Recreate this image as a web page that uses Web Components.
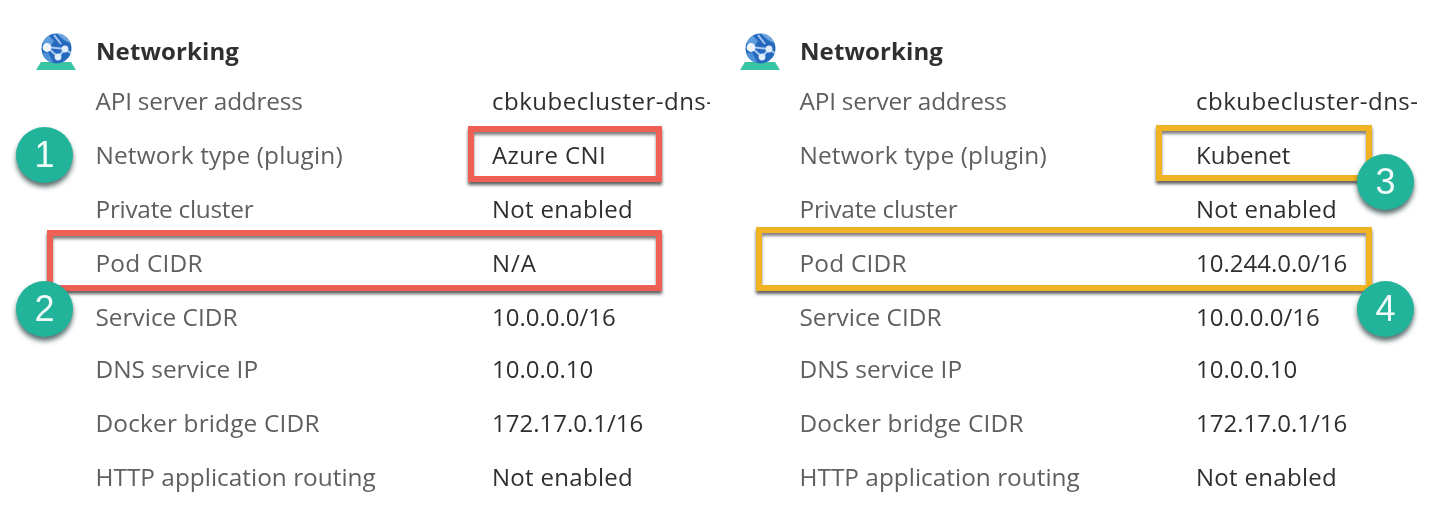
<!DOCTYPE html>
<html lang="en">
<head>
<meta charset="utf-8">
<title>Networking</title>
<style>
	html, body { margin: 0; background: #fff; }
	body { display: flex; width: 1436px; height: 522px; overflow: hidden; font-family: "Open Sans", "Noto Sans", sans-serif; filter: blur(.35px); }
</style>
</head>
<body>

<template id="panel-template">
	<style>
		:host { display: block; position: relative; width: 704px; height: 522px; box-sizing: border-box; padding: 27px 0 0 34px; flex: none; }
		.head { display: flex; align-items: center; height: 47px; gap: 20px; }
		h2 { margin: 0; font-size: 24px; font-weight: 700; color: #2f2f2f; letter-spacing: .1px; }
		.rows { display: flex; flex-direction: column; }
		svg { flex: none; width: 42px; height: 47px; }
	</style>
	<div class="head">
		<svg viewBox="0 0 42 47">
			<defs><clipPath id="globe"><circle cx="22.5" cy="21.5" r="15"/></clipPath></defs>
			<path d="M7 35 H37 L42 43 H2 Z" fill="#38c4a2"/>
			<circle cx="22.5" cy="21.5" r="15" fill="#2469bd"/>
			<g clip-path="url(#globe)">
				<path d="M12 6 L20 14 L16 20 L7 16 Z" fill="#5f9bdc"/>
				<path d="M22 6 L30 13 L38 17 L38 8 Z" fill="#6ea6e2"/>
				<path d="M6 27 L14 25 L20 37 L10 36 Z" fill="#4f8fd6"/>
				<path d="M13 20 L31 22 M13 20 L24 30 M31 22 L24 30 M20 8 L27 17 M31 22 L38 27" stroke="#a9c9ee" stroke-width="2" fill="none"/>
			</g>
			<circle cx="13" cy="20.5" r="4.4" fill="#eef4fb"/>
			<circle cx="31" cy="22" r="3.4" fill="#e1ecf9"/>
			<circle cx="24" cy="30" r="3.4" fill="#e1ecf9"/>
		</svg>
		<h2><slot name="title"></slot></h2>
	</div>
	<div class="rows"><slot></slot></div>
	<slot name="over"></slot>
</template>

<template id="row-template">
	<style>
		:host { display: grid; box-sizing: border-box; grid-template-columns: 396px var(--clip, 218px); height: 54px; align-items: center; padding-left: 62px; font-size: 24px; line-height: 32px; }
		.label { color: #5f5f5f; white-space: nowrap; font-size: 24.4px; margin-left: -.5px; letter-spacing: var(--lls, 0); }
		.value { color: #2f2f2f; white-space: nowrap; overflow: hidden; letter-spacing: var(--ls, 0); }
	</style>
	<div class="label"><slot name="label"></slot></div>
	<div class="value"><slot></slot></div>
</template>

<template id="mark-template">
	<style>
		:host { display: block; position: absolute; box-sizing: border-box; border: 6px solid var(--c); box-shadow: 0 3px 3px rgba(30,30,30,.7), inset 0 3px 3px rgba(30,30,30,.55); }
	</style>
</template>

<template id="badge-template">
	<style>
		:host { display: flex; position: absolute; align-items: center; justify-content: center; width: 57px; height: 56px; border-radius: 50%; background: #22b39b; color: #f0faf8; font-family: "Liberation Sans", sans-serif; font-size: 36px; box-shadow: 0 4px 5px rgba(20,50,50,.7); }
	</style>
	<slot></slot>
</template>

<net-panel>
	<span slot="title">Networking</span>
	<net-row style="--ls:.5px; --lls:-.22px"><span slot="label">API server address</span>cbkubecluster-dns-1</net-row>
	<net-row style="--ls:.4px; --lls:.15px"><span slot="label">Network type (plugin)</span>Azure CNI</net-row>
	<net-row style="--ls:.3px; --lls:-.28px"><span slot="label">Private cluster</span>Not enabled</net-row>
	<net-row style="--ls:1px; --lls:.2px"><span slot="label">Pod CIDR</span>N/A</net-row>
	<net-row style="height:52px; padding-top:2px"><span slot="label">Service CIDR</span>10.0.0.0/16</net-row>
	<net-row><span slot="label">DNS service IP</span>10.0.0.10</net-row>
	<net-row style="--lls:.17px"><span slot="label">Docker bridge CIDR</span>172.17.0.1/16</net-row>
	<net-row style="--ls:.3px"><span slot="label">HTTP application routing</span>Not enabled</net-row>
	<net-mark slot="over" style="--c:#ee5f55; left:468px; top:126px; width:194px; height:56px"></net-mark>
	<net-mark slot="over" style="--c:#ee5f55; left:47px; top:230px; width:615px; height:61px"></net-mark>
	<net-badge slot="over" style="left:16px; top:127px">1</net-badge>
	<net-badge slot="over" style="left:16px; top:281px">2</net-badge>
</net-panel>

<net-panel>
	<span slot="title">Networking</span>
	<net-row style="--clip:222px; --ls:.5px; --lls:-.22px"><span slot="label">API server address</span>cbkubecluster-dns-1</net-row>
	<net-row style="--lls:.15px"><span slot="label">Network type (plugin)</span>Kubenet</net-row>
	<net-row style="--ls:.3px; --lls:-.28px"><span slot="label">Private cluster</span>Not enabled</net-row>
	<net-row style="--lls:.2px"><span slot="label">Pod CIDR</span>10.244.0.0/16</net-row>
	<net-row style="height:52px; padding-top:2px"><span slot="label">Service CIDR</span>10.0.0.0/16</net-row>
	<net-row><span slot="label">DNS service IP</span>10.0.0.10</net-row>
	<net-row style="--lls:.17px"><span slot="label">Docker bridge CIDR</span>172.17.0.1/16</net-row>
	<net-row style="--ls:.3px"><span slot="label">HTTP application routing</span>Not enabled</net-row>
	<net-mark slot="over" style="--c:#f0b323; left:452px; top:125px; width:216px; height:56px"></net-mark>
	<net-mark slot="over" style="--c:#f0b323; left:52px; top:227px; width:616px; height:64px"></net-mark>
	<net-badge slot="over" style="left:653px; top:154px">3</net-badge>
	<net-badge slot="over" style="left:653px; top:281px">4</net-badge>
</net-panel>

<script>
function define(name, templateId) {
	customElements.define(name, class extends HTMLElement {
		constructor() {
			super();
			const content = document.getElementById(templateId).content;
			this.attachShadow({mode: 'open'}).appendChild(content.cloneNode(true));
		}
	});
}
define('net-panel', 'panel-template');
define('net-row', 'row-template');
define('net-mark', 'mark-template');
define('net-badge', 'badge-template');
</script>
</body>
</html>
